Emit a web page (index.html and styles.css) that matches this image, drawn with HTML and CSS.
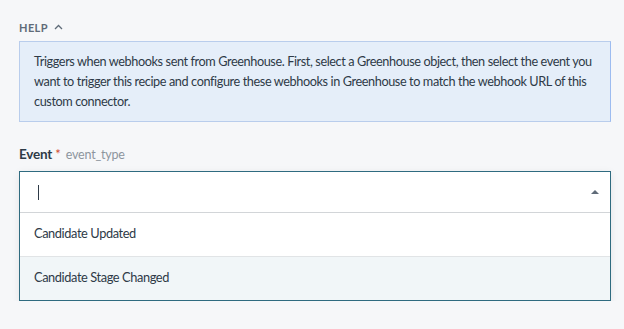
FILE: index.html
```html
<!DOCTYPE html>
<html lang="en">
<head>
    <meta charset="UTF-8">
    <meta name="viewport" content="width=device-width, initial-scale=1.0">
    <title>Event trigger</title>
    <link rel="stylesheet" href="styles.css">
</head>
<body>
    <div class="panel">
        <div class="help-toggle">
            HELP
            <svg class="chevron" width="9" height="6" viewBox="0 0 9 6"><path d="M1 5 L4.5 1.5 L8 5" fill="none" stroke="#5f6b78" stroke-width="1.3"/></svg>
        </div>
        <div class="help-box">
            Triggers when webhooks sent from Greenhouse. First, select a Greenhouse object, then select the event you<br>
            want to trigger this recipe and configure these webhooks in Greenhouse to match the webhook URL of this<br>
            custom connector.
        </div>

        <div class="field">
            <div class="field-label">
                <span class="name">Event</span><span class="required">*</span>
                <span class="hint">event_type</span>
            </div>
            <div class="select">
                <div class="select-input">
                    <span class="caret"></span>
                    <span class="arrow"></span>
                </div>
                <div class="option">Candidate Updated</div>
                <div class="option active">Candidate Stage Changed</div>
            </div>
        </div>
    </div>
</body>
</html>
```

FILE: styles.css
```css
body {
    margin: 0;
    background-color: #f6f7f9;
    font-family: "Lato", "Open Sans", sans-serif;
    color: #2e3a47;
}
.panel {
    padding: 19px 13px 0 19px;
}
.help-toggle {
    display: flex;
    align-items: center;
    gap: 6px;
    font-size: 11px;
    font-weight: bold;
    letter-spacing: 0.4px;
    color: #5f6b78;
    height: 16px;
    margin-bottom: 6px;
}
.help-box {
    background-color: #e5eef9;
    border: 1px solid #b9cdec;
    border-right-color: #9dbcf0;
    padding: 9px 4px 10px 14px;
    font-size: 12.7px;
    letter-spacing: -0.4px;
    line-height: 20px;
    white-space: nowrap;
}
.field {
    margin-top: 24px;
}
.field-label {
    display: flex;
    align-items: baseline;
    height: 18px;
    margin-bottom: 7px;
}
.name {
    font-weight: bold;
    font-size: 13.5px;
    letter-spacing: -0.2px;
}
.required {
    color: #cf4b2f;
    font-size: 13px;
    margin-left: 3px;
}
.hint {
    color: #8d959e;
    font-size: 12.5px;
    letter-spacing: -0.2px;
    margin-left: 5px;
}
.select {
    background: white;
    border: 1px solid #2f6b80;
    box-shadow: 0 2px 8px rgba(0, 0, 0, 0.08);
}
.select-input {
    height: 40px;
    border-bottom: 1px solid #d2d5d8;
    display: flex;
    align-items: center;
    justify-content: space-between;
    padding: 0 11px 0 18px;
}
.caret {
    width: 1px;
    height: 15px;
    background: #2e3a47;
}
.arrow {
    width: 0;
    height: 0;
    border-left: 4px solid transparent;
    border-right: 4px solid transparent;
    border-bottom: 4px solid #5f6b78;
}
.option {
    height: 43px;
    display: flex;
    align-items: center;
    padding: 0 0 3px 14px;
    box-sizing: border-box;
    font-size: 12.8px;
    letter-spacing: -0.4px;
}
.option + .option {
    border-top: 1px solid #e1e4e6;
    height: 44px;
}
.option.active {
    background-color: #f1f6f8;
}
```
